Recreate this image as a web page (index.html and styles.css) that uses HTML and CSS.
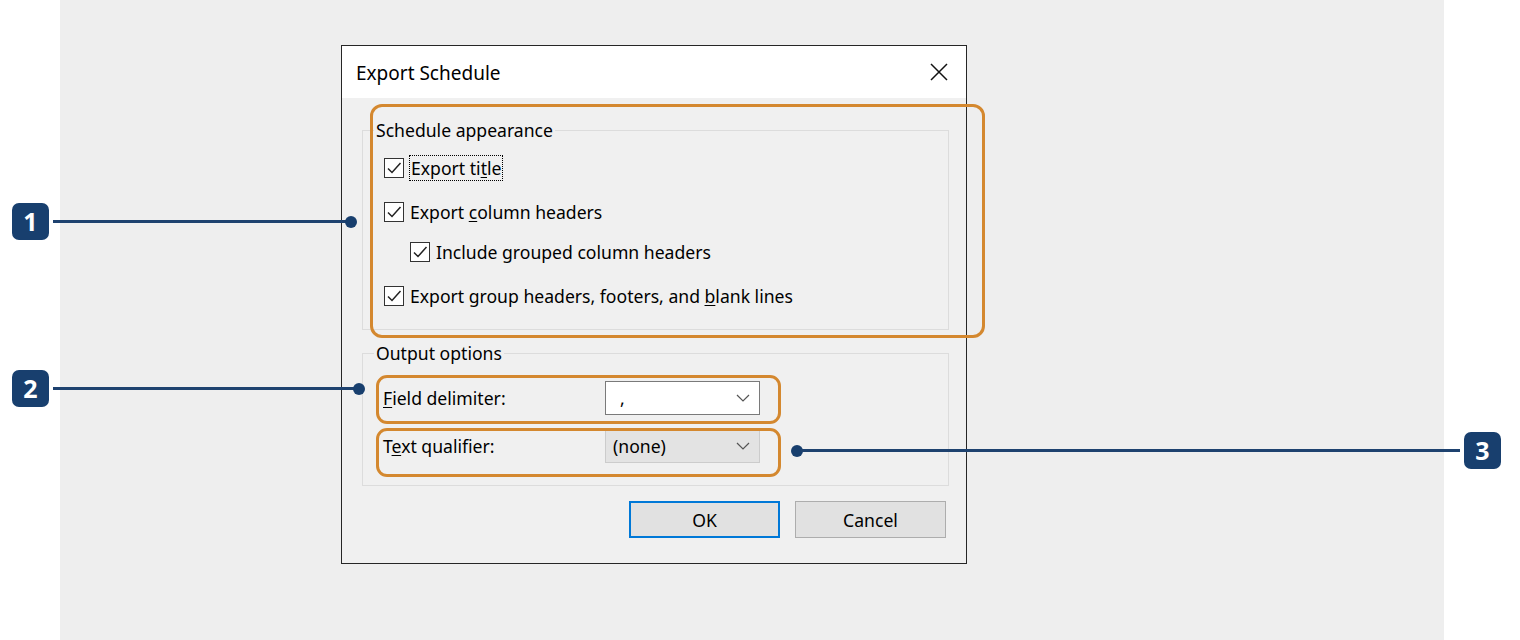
FILE: index.html
```html
<!DOCTYPE html>
<html lang="en">
<head>
<meta charset="utf-8">
<title>Export Schedule</title>
<link rel="stylesheet" href="styles.css">
</head>
<body>
<div class="stage">
  <div class="panel">
    <div class="dialog">
      <div class="titlebar">
        <span class="title">Export Schedule</span>
        <svg class="close" width="18" height="18" viewBox="0 0 18 18"><path d="M1 1L17 17M17 1L1 17" stroke="#111" stroke-width="1.5" fill="none"/></svg>
      </div>
      <div class="dbody">
        <fieldset class="group group-appearance">
          <legend>Schedule appearance</legend>
          <div class="row">
            <span class="cb"><svg width="20" height="20" viewBox="0 0 20 20"><path d="M4 10.5L8 14.5L16.5 5" stroke="#222" stroke-width="1.5" fill="none"/></svg></span>
            <span class="focus">Export ti<u>t</u>le</span>
          </div>
          <div class="row row-2">
            <span class="cb"><svg width="20" height="20" viewBox="0 0 20 20"><path d="M4 10.5L8 14.5L16.5 5" stroke="#222" stroke-width="1.5" fill="none"/></svg></span>
            <span class="lbl">Export <u>c</u>olumn headers</span>
          </div>
          <div class="row row-3 indent">
            <span class="cb"><svg width="20" height="20" viewBox="0 0 20 20"><path d="M4 10.5L8 14.5L16.5 5" stroke="#222" stroke-width="1.5" fill="none"/></svg></span>
            <span class="lbl">Include <u>g</u>rouped column headers</span>
          </div>
          <div class="row row-4">
            <span class="cb"><svg width="20" height="20" viewBox="0 0 20 20"><path d="M4 10.5L8 14.5L16.5 5" stroke="#222" stroke-width="1.5" fill="none"/></svg></span>
            <span class="lbl">Export group headers, footers, and <u>b</u>lank lines</span>
          </div>
        </fieldset>
        <fieldset class="group group-output">
          <legend>Output options</legend>
          <div class="orow">
            <span class="olbl"><u>F</u>ield delimiter:</span>
            <div class="combo combo-edit">
              <span class="cval">,</span>
              <svg width="14" height="8" viewBox="0 0 14 8"><path d="M1 1L7 7L13 1" stroke="#555" stroke-width="1.2" fill="none"/></svg>
            </div>
          </div>
          <div class="orow orow-2">
            <span class="olbl">T<u>e</u>xt qualifier:</span>
            <div class="combo combo-dis">
              <span class="cval">(none)</span>
              <svg width="14" height="8" viewBox="0 0 14 8"><path d="M1 1L7 7L13 1" stroke="#555" stroke-width="1.2" fill="none"/></svg>
            </div>
          </div>
        </fieldset>
        <div class="buttons">
          <button class="btn btn-default">OK</button>
          <button class="btn">Cancel</button>
        </div>
      </div>
    </div>
  </div>

  <div class="hl hl-1"></div>
  <div class="hl hl-2"></div>
  <div class="hl hl-3"></div>

  <div class="callout callout-1">
    <span class="badge">1</span><span class="line"></span><span class="dot"></span>
  </div>
  <div class="callout callout-2">
    <span class="badge">2</span><span class="line"></span><span class="dot"></span>
  </div>
  <div class="callout callout-3">
    <span class="dot"></span><span class="line"></span><span class="badge">3</span>
  </div>
</div>
</body>
</html>
```
FILE: styles.css
```css
* { box-sizing: border-box; }
html, body { margin: 0; padding: 0; background: #ffffff; }
body { font-family: "Noto Sans", "Open Sans", sans-serif; color: #000; }

.stage { position: relative; width: 1520px; height: 640px; overflow: hidden; }

.panel {
  margin-left: 60px;
  width: 1384px;
  height: 640px;
  background: #eeeeee;
  padding: 45px 0 0 281px;
}

.dialog {
  width: 626px;
  height: 519px;
  border: 1px solid #262626;
  background: #f0f0f0;
  display: flex;
  flex-direction: column;
}

.titlebar {
  height: 52px;
  background: #ffffff;
  display: flex;
  align-items: center;
  justify-content: space-between;
  padding: 0 18px 0 14px;
}
.title { font-size: 19px; line-height: 24px; margin-top: 1px; }
.close { display: block; }

.dbody { padding: 22px 17px 0 20px; }

.group {
  margin: 0;
  border: 1px solid #dcdcdc;
  padding: 17px 0 22px 20px;
}
.group legend {
  font-size: 17.6px;
  line-height: 20px;
  padding: 0 2px;
  margin-left: -9px;
}

.row {
  display: flex;
  align-items: center;
  gap: 5px;
  height: 22px;
  font-size: 17.6px;
  margin-left: 1px;
}
.row-2 { margin-top: 22px; gap: 6px; }
.row-3 { margin-top: 18px; gap: 6px; }
.row-4 { margin-top: 22px; gap: 6px; }
.indent { margin-left: 27px; }

.cb {
  width: 20px;
  height: 20px;
  border: 1px solid #333;
  background: #fff;
  display: block;
  flex: none;
}
.cb svg { display: block; margin: -1px; }

.focus {
  border: 1px dotted #000;
  line-height: 24px;
  padding: 0 1px;
}
.lbl { line-height: 24px; }
u { text-underline-offset: 2px; }

.group-output { margin-top: 13px; padding: 18px 0 22px 20px; }
.orow { display: flex; align-items: center; height: 34px; font-size: 17.6px; }
.orow-2 { margin-top: 14px; }
.olbl { width: 222px; flex: none; }

.combo {
  width: 155px;
  height: 34px;
  display: flex;
  align-items: center;
  justify-content: space-between;
  padding: 0 9px 0 14px;
}
.combo svg { display: block; }
.combo-edit { background: #ffffff; border: 1px solid #7a7a7a; }
.combo-dis { background: #e3e3e3; border: 1px solid #cccccc; padding-left: 7px; }
.cval { font-size: 17.6px; line-height: 24px; }

.buttons {
  display: flex;
  justify-content: flex-end;
  gap: 15px;
  margin-top: 15px;
  padding-right: 3px;
}
.btn {
  width: 151px;
  height: 37px;
  background: #e1e1e1;
  border: 1px solid #adadad;
  font-family: "Noto Sans", "Open Sans", sans-serif;
  font-size: 17.6px;
  color: #000;
  padding: 0;
}
.btn-default { border: 2px solid #0078d7; }

.hl {
  position: absolute;
  border: 3px solid #d4882f;
  border-radius: 12px;
}
.hl-1 { left: 370px; top: 104px; width: 615px; height: 234px; }
.hl-2 { left: 376px; top: 375px; width: 405px; height: 49px; border-radius: 11px; }
.hl-3 { left: 376px; top: 428px; width: 405px; height: 49px; border-radius: 11px; }

.callout { position: absolute; display: flex; align-items: center; height: 37px; }
.callout-1 { left: 12px; top: 203px; width: 345px; }
.callout-2 { left: 12px; top: 370px; width: 353px; }
.callout-3 { left: 791px; top: 432px; width: 710px; }

.badge {
  width: 37px;
  height: 37px;
  flex: none;
  background: #183f6e;
  border-radius: 7px;
  color: #ffffff;
  font-family: "Open Sans", "Noto Sans", sans-serif;
  font-weight: 700;
  font-size: 25px;
  line-height: 37px;
  text-align: center;
}
.line { flex: 1; height: 3px; background: #1e426f; margin: 0 -2px 0 4px; }
.callout-3 .line { margin: 0 4px 0 -2px; }
.dot { width: 12px; height: 12px; border-radius: 50%; background: #183f6e; flex: none; }
```
